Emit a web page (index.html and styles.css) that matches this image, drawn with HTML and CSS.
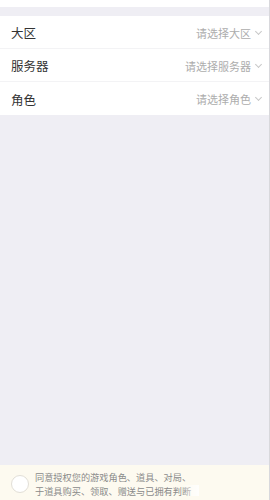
FILE: index.html
```html
<html>
    <head>
        <meta charset="UTF-8">
        <link rel="stylesheet" href="styles.css">
    </head>
    <body>
        <div class="page">
            <div class="top"></div>
            <div class="gap"></div>
            <div class="list">
                <div class="row">
                    <span class="label">大区</span>
                    <span class="value">请选择大区<span class="arrow"></span></span>
                </div>
                <div class="row">
                    <span class="label">服务器</span>
                    <span class="value">请选择服务器<span class="arrow"></span></span>
                </div>
                <div class="row">
                    <span class="label">角色</span>
                    <span class="value">请选择角色<span class="arrow"></span></span>
                </div>
            </div>
            <div class="fill"></div>
            <div class="agree">
                <div class="check"></div>
                <div class="terms">
                    <p>同意授权您的游戏角色、道具、对局、</p>
                    <p>于道具购买、领取、赠送与已拥有判断</p>
                    <div class="fade"></div>
                </div>
            </div>
        </div>
    </body>
</html>
```
FILE: styles.css
```css
body {
    margin: 0;
    font-family: "Noto Sans CJK SC", "Noto Sans", sans-serif;
}

.page {
    width: 270px;
    height: 500px;
    display: flex;
    flex-direction: column;
    background-color: #efeef4;
    border-right: 1px solid #d8d8dc;
    box-sizing: border-box;
}

.top {
    height: 7px;
    background-color: #fff;
}

.gap {
    height: 9px;
}

.list {
    background-color: #fff;
}

.row {
    height: 33px;
    display: flex;
    align-items: center;
    justify-content: space-between;
    padding: 1px 8px 0 11px;
    border-bottom: 1px solid #f3f3f5;
    box-sizing: border-box;
}
.row:last-child {
    border-bottom: none;
}

.label {
    font-size: 12.5px;
    color: #333;
}

.value {
    font-size: 11px;
    color: #adadad;
    display: flex;
    align-items: center;
}

.arrow {
    width: 4px;
    height: 4px;
    border-right: 1px solid #c8c8c8;
    border-bottom: 1px solid #c8c8c8;
    transform: rotate(45deg);
    margin: -3px 0 0 5px;
}

.fill {
    flex: 1;
}

.agree {
    height: 35px;
    background-color: #fdfaf0;
    display: flex;
    align-items: center;
    padding-left: 11px;
}

.check {
    width: 16px;
    height: 16px;
    border-radius: 50%;
    background-color: #fff;
    border: 1px solid #e2dfd7;
    margin: 2px 6px 0 0;
}

.terms {
    position: relative;
    width: 164px;
    overflow: hidden;
    white-space: nowrap;
    padding-top: 2px;
}

.terms p {
    margin: 0;
    font-size: 9.2px;
    line-height: 14px;
    color: #8a8a8a;
}

.fade {
    position: absolute;
    right: 0;
    bottom: 2px;
    height: 11px;
    width: 18px;
    background: linear-gradient(to right, rgba(255, 255, 255, 0), rgba(255, 255, 255, 0.85));
}
```
